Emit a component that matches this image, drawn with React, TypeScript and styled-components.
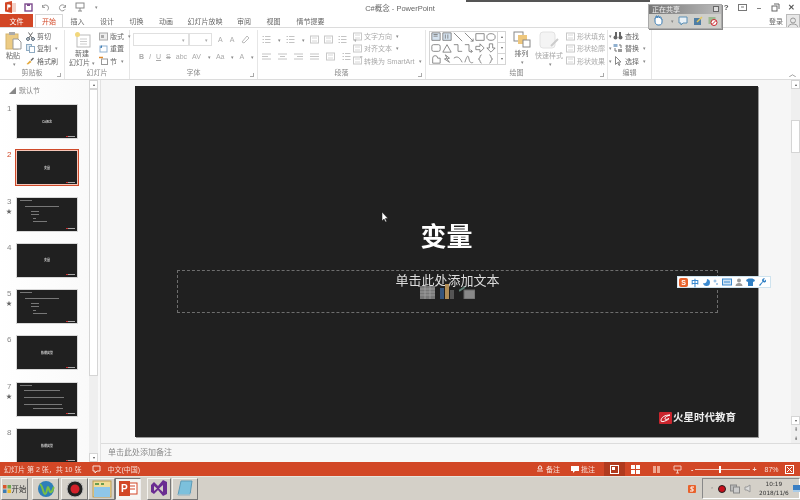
import { FunctionComponent, ReactNode } from "react"
import styled, { createGlobalStyle } from "styled-components"

const CJK = `"Liberation Sans", "Noto Sans CJK SC", sans-serif`

const GlobalStyle = createGlobalStyle`
  html, body { margin: 0; padding: 0; background: #fff; }
  * { box-sizing: border-box; }
`

const Screen = styled.div`
  position: relative;
  width: 800px;
  height: 500px;
  overflow: hidden;
  display: flex;
  flex-direction: column;
  font-family: ${CJK};
  font-size: 7px;
  color: #666;
  background: #fff;
  filter: blur(0.45px);
`

/* ---------- title bar ---------- */
const TitleBar = styled.div`
  height: 14px;
  flex: none;
  display: flex;
  align-items: center;
  padding-left: 4px;
  position: relative;
`
const Quick = styled.div`
  display: flex;
  align-items: center;
  gap: 8px;
  width: 300px;
`
const WindowTitle = styled.div`
  position: absolute;
  left: 300px;
  width: 200px;
  text-align: center;
  font-size: 7.5px;
  color: #666;
`
const WindowButtons = styled.div`
  margin-left: auto;
  display: flex;
  align-items: center;
  color: #555;
  font-size: 8px;
  font-weight: bold;
`
const WindowButton = styled.span`
  width: 16.4px;
  display: flex;
  justify-content: center;
`

/* ---------- tabs ---------- */
const TabBar = styled.div`
  height: 13px;
  flex: none;
  display: flex;
  align-items: stretch;
  position: relative;
`
const FileTab = styled.div`
  width: 33px;
  background: #d24726;
  color: #fff;
  display: flex;
  align-items: center;
  justify-content: center;
`
const Tab = styled.div<{ $w: number; $active?: boolean }>`
  width: ${(p) => p.$w}px;
  display: flex;
  align-items: center;
  justify-content: center;
  color: ${(p) => (p.$active ? "#d24726" : "#666")};
  background: #fff;
  ${(p) => p.$active && "border: 1px solid #d8d8d8; border-bottom: none; margin-left: 2px;"}
`
const Login = styled.div`
  margin-left: auto;
  display: flex;
  align-items: center;
  gap: 3px;
  color: #666;
`
const Avatar = styled.div`
  width: 14px;
  height: 14px;
  background: #e8e8e8;
  border: 1px solid #bbb;
  display: flex;
  align-items: flex-end;
  justify-content: center;
`

/* ---------- ribbon ---------- */
const Ribbon = styled.div`
  height: 53px;
  flex: none;
  display: flex;
  border-top: 1px solid #dcdcdc;
  border-bottom: 1px solid #dcdcdc;
  background: #fff;
  position: relative;
`
const Group = styled.div<{ $w: number }>`
  width: ${(p) => p.$w}px;
  flex: none;
  display: flex;
  flex-direction: column;
  border-right: 1px solid #e6e6e6;
  margin-top: 2px;
  position: relative;
`
const GroupBody = styled.div<{ $px?: number }>`
  flex: 1;
  display: flex;
  gap: 3px;
  padding: 0 ${(p) => p.$px ?? 3}px;
  min-height: 0;
`
const GroupLabel = styled.div`
  height: 12px;
  line-height: 11px;
  text-align: center;
  color: #888;
`
const Launcher = styled.span`
  position: absolute;
  right: 3px;
  bottom: 2px;
  width: 4px;
  height: 4px;
  border-right: 1px solid #aaa;
  border-bottom: 1px solid #aaa;
`
const BigButton = styled.div<{ $w: number; $dim?: boolean }>`
  width: ${(p) => p.$w}px;
  flex: none;
  display: flex;
  flex-direction: column;
  align-items: center;
  line-height: 9px;
  padding-top: 1px;
  color: ${(p) => (p.$dim ? "#aaa" : "#666")};
`
const BigIcon = styled.div`
  height: 19px;
  margin-bottom: 1px;
  display: flex;
  align-items: center;
`
const SmallColumn = styled.div<{ $w?: number }>`
  display: flex;
  flex-direction: column;
  ${(p) => p.$w && `width: ${p.$w}px;`}
`
const SmallRow = styled.div<{ $dim?: boolean }>`
  height: 12.5px;
  display: flex;
  align-items: center;
  gap: 2px;
  white-space: nowrap;
  color: ${(p) => (p.$dim ? "#aaa" : "#666")};
`
const Caret = styled.span`
  font-size: 5px;
  color: #888;
  margin-left: 2px;
`
const FontRows = styled.div<{ $w?: number }>`
  display: flex;
  flex-direction: column;
  gap: 4px;
  padding-top: 3px;
  ${(p) => (p.$w ? `flex: none; width: ${p.$w}px;` : "flex: 1;")}
`
const Line = styled.div<{ $gap?: number; $pl?: number }>`
  height: 13px;
  display: flex;
  align-items: center;
  gap: ${(p) => p.$gap ?? 5}px;
  padding-left: ${(p) => p.$pl ?? 0}px;
  color: #aaa;
  font-size: 7px;
`
const Combo = styled.div<{ $w: number }>`
  width: ${(p) => p.$w}px;
  height: 13px;
  border: 1px solid #e0e0e0;
  display: flex;
  align-items: center;
  justify-content: flex-end;
  padding-right: 3px;
  font-size: 5px;
  color: #aaa;
`
const Gallery = styled.div`
  width: 77px;
  height: 34px;
  margin: 1px 2px 0 0;
  border: 1px solid #d5d5d5;
  display: flex;
  flex: none;
`
const GalleryGrid = styled.div`
  flex: 1;
  display: grid;
  grid-template-columns: repeat(6, 1fr);
  grid-template-rows: repeat(3, 1fr);
  place-items: center;
`
const GalleryScroll = styled.div`
  width: 8px;
  border-left: 1px solid #d5d5d5;
  display: flex;
  flex-direction: column;
`
const GalleryStep = styled.div`
  flex: 1;
  border-bottom: 1px solid #d5d5d5;
  font-size: 4px;
  text-align: center;
  line-height: 10px;
  color: #666;
`
const Collapse = styled.div`
  margin-left: auto;
  align-self: flex-end;
  padding: 0 4px 1px 0;
  font-size: 7px;
  color: #666;
`

/* ---------- workspace ---------- */
const Workspace = styled.div`
  flex: 1;
  min-height: 0;
  display: flex;
  background: #f6f6f6;
`
const SidePane = styled.div`
  width: 101px;
  flex: none;
  display: flex;
  background: linear-gradient(90deg, #fff, #f9f9f9);
  border-right: 1px solid #e2e2e2;
  padding-right: 2px;
`
const SlideList = styled.div`
  flex: 1;
  overflow: hidden;
`
const SectionName = styled.div`
  height: 24px;
  padding: 5px 0 0 9px;
  display: flex;
  gap: 3px;
  color: #888;
`
const ThumbRow = styled.div`
  height: 46.3px;
  display: flex;
`
const ThumbIndex = styled.div<{ $on?: boolean }>`
  width: 16px;
  padding-left: 7px;
  font-size: 8px;
  line-height: 9px;
  color: ${(p) => (p.$on ? "#d24726" : "#888")};
`
const Star = styled.div`
  font-size: 6px;
  margin-top: 1px;
  margin-left: -1px;
  color: #666;
`
const Thumb = styled.div<{ $on?: boolean; $list?: boolean }>`
  position: relative;
  width: 62px;
  height: 35px;
  background: #202020;
  border: 1px solid ${(p) => (p.$on ? "#f4c4b6" : "#d8d8d8")};
  outline: ${(p) => (p.$on ? "1px solid #cf4a2a" : "none")};
  display: flex;
  flex-direction: column;
  align-items: center;
  justify-content: ${(p) => (p.$list ? "flex-start" : "center")};
  padding-top: ${(p) => (p.$list ? 2 : 0)}px;
  color: #ccc;
  font-size: 3px;
  font-weight: bold;
`
const ThumbLine = styled.div<{ $w: number; $x: number; $mb: number }>`
  width: ${(p) => p.$w}px;
  height: 1px;
  margin: 0 0 ${(p) => p.$mb}px ${(p) => p.$x}px;
  align-self: flex-start;
  background: #777;
`
const ThumbLogo = styled.div`
  position: absolute;
  right: 2px;
  bottom: 1.5px;
  width: 9px;
  height: 1px;
  background: linear-gradient(90deg, #c33 25%, #aaa 25%);
`
const VScroll = styled.div<{ $w: number }>`
  width: ${(p) => p.$w}px;
  flex: none;
  display: flex;
  flex-direction: column;
  background: #efefef;
`
const ScrollButton = styled.div`
  height: 9px;
  flex: none;
  background: #fff;
  border: 1px solid #d5d5d5;
  font-size: 4px;
  line-height: 7px;
  text-align: center;
  color: #555;
`
const ScrollThumb = styled.div<{ $top: number; $h: number }>`
  margin-top: ${(p) => p.$top}px;
  height: ${(p) => p.$h}px;
  flex: none;
  background: #fff;
  border: 1px solid #d5d5d5;
`
const ScrollSpacer = styled.div`
  flex: 1;
`
const PageStep = styled.div`
  height: 9px;
  flex: none;
  font-size: 5px;
  line-height: 9px;
  text-align: center;
  color: #666;
`
const Center = styled.div`
  flex: 1;
  min-width: 0;
  display: flex;
  flex-direction: column;
`
const Stage = styled.div`
  flex: 1;
  min-height: 0;
  display: flex;
  justify-content: space-between;
  padding-left: 34px;
`
const Notes = styled.div`
  height: 19px;
  flex: none;
  background: #f7f7f7;
  border-top: 1px solid #dcdcdc;
  padding-left: 7px;
  font-size: 8px;
  line-height: 18px;
  color: #888;
`
const Slide = styled.div`
  position: relative;
  width: 623px;
  height: 351px;
  margin-top: 6px;
  background: #202020;
  box-shadow: 1px 1px 0 #999;
  color: #fff;
  display: flex;
  flex-direction: column;
`
const SlideTitle = styled.div`
  margin-top: 133px;
  text-align: center;
  font-size: 26px;
  line-height: 36px;
  font-weight: bold;
  color: #fff;
`
const Placeholder = styled.div`
  position: relative;
  width: 541px;
  height: 43px;
  margin: 15px 0 0 42px;
  border: 1px dashed #6e6e6e;
  text-align: center;
  font-size: 13px;
  line-height: 19px;
  color: #ddd;
`
const PlaceholderIcons = styled.div`
  position: absolute;
  left: 242px;
  top: 13px;
  display: flex;
  gap: 5px;
  align-items: flex-end;
`
const Brand = styled.div`
  position: absolute;
  right: 22px;
  bottom: 13px;
  display: flex;
  align-items: center;
  gap: 1px;
  font-size: 10.5px;
  font-weight: bold;
  line-height: 13px;
  color: #eee;
`

/* ---------- bottom bars ---------- */
const StatusBar = styled.div`
  height: 14px;
  flex: none;
  background: #d24726;
  color: #f7ddd5;
  display: flex;
  align-items: center;
  padding-left: 4px;
`
const StatusItem = styled.div<{ $ml?: number }>`
  display: flex;
  align-items: center;
  gap: 2px;
  margin-left: ${(p) => p.$ml ?? 0}px;
  white-space: nowrap;
`
const ViewButton = styled.div<{ $active?: boolean; $ml?: number }>`
  width: 21px;
  height: 14px;
  margin-left: ${(p) => p.$ml ?? 0}px;
  display: flex;
  align-items: center;
  justify-content: center;
  background: ${(p) => (p.$active ? "#b03a1e" : "transparent")};
`
const ZoomTrack = styled.div`
  position: relative;
  width: 55px;
  height: 1px;
  background: #f3c7ba;
`
const ZoomKnob = styled.div`
  position: absolute;
  left: 24px;
  top: -3px;
  width: 2px;
  height: 7px;
  background: #fff;
`
const Taskbar = styled.div`
  height: 24px;
  flex: none;
  background: #d4d0c8;
  display: flex;
  align-items: center;
  padding-left: 1px;
  border-top: 1px solid #e6e4de;
`
const TaskButton = styled.div<{ $w: number; $ml?: number; $pressed?: boolean }>`
  width: ${(p) => p.$w}px;
  height: 22px;
  margin-left: ${(p) => p.$ml ?? 0}px;
  flex: none;
  display: flex;
  align-items: center;
  justify-content: center;
  gap: 1px;
  font-size: 7.5px;
  color: #333;
  background: ${(p) => (p.$pressed ? "#f6f5f2" : "#d4d0c8")};
  border: 1px solid;
  border-color: ${(p) => (p.$pressed ? "#777 #eee #eee #777" : "#f4f3ef #777 #777 #f4f3ef")};
`
const TaskSpacer = styled.div`
  flex: 1;
`
const Tray = styled.div`
  width: 98px;
  height: 21px;
  margin-left: 6px;
  flex: none;
  display: flex;
  align-items: center;
  gap: 4px;
  padding-left: 5px;
  border: 1px solid;
  border-color: #888 #fff #fff #888;
  color: #333;
`
const Clock = styled.div`
  width: 33px;
  margin-left: 2px;
  text-align: center;
  font-family: "DejaVu Sans", sans-serif;
  font-size: 5.8px;
  line-height: 9px;
  white-space: nowrap;
`

/* ---------- overlays ---------- */
const TopStrip = styled.div`
  position: absolute;
  left: 466px;
  top: 0;
  width: 184px;
  height: 2px;
  background: #555;
`
const SharePanel = styled.div`
  position: absolute;
  left: 648px;
  top: 4px;
  width: 74px;
  height: 25px;
  background: #cfcfcb;
  border: 1px solid #aaa;
  box-shadow: 1px 1px 0 #888;
  display: flex;
  flex-direction: column;
`
const ShareHead = styled.div`
  height: 9px;
  background: linear-gradient(90deg, #777, #bbb);
  color: #eee;
  font-size: 7px;
  line-height: 9px;
  padding-left: 3px;
  display: flex;
  justify-content: space-between;
`
const ShareClose = styled.span`
  width: 6px;
  height: 6px;
  margin: 1px 2px;
  background: #ddd;
  border: 1px solid #666;
`
const ShareTools = styled.div`
  flex: 1;
  display: flex;
  align-items: center;
  gap: 4px;
  padding-left: 4px;
`
const ImeBar = styled.div`
  position: absolute;
  left: 677px;
  top: 276px;
  width: 94px;
  height: 12px;
  background: #fff;
  border: 1px solid #cfe3ee;
  display: flex;
  align-items: center;
  gap: 3px;
  padding-left: 1px;
  color: #3b8ad0;
  font-size: 8px;
  font-weight: bold;
`
const ImeLogo = styled.span`
  width: 9px;
  height: 9px;
  background: #e8622c;
  color: #fff;
  border-radius: 2px;
  font-size: 7px;
  line-height: 9px;
  text-align: center;
`
const Pointer = styled.svg`
  position: absolute;
  left: 381px;
  top: 211px;
`

/* ---------- drawings ---------- */
const Svg: FunctionComponent<{ w: number; h?: number; vb?: string; children: ReactNode }> = ({ w, h, vb, children }) => (
  <svg width={w} height={h ?? w} viewBox={vb ?? `0 0 ${w} ${h ?? w}`} fill="none" style={{ flex: "none" }}>
    {children}
  </svg>
)

const PptLogo = () => (
  <Svg w={12}>
    <rect x="5" y="2" width="7" height="9" fill="#f3d2c8" />
    <path d="M1 1.500 8 0v12l-7-1.500z" fill="#d24726" />
    <path d="M3.200 3.500h2a1.300 1.300 0 0 1 0 3H4.200v2.200h-1z" fill="#fff" />
  </Svg>
)
const SaveIcon = () => (
  <Svg w={9}>
    <rect x="1" y="1" width="7" height="7" stroke="#7d4a8d" strokeWidth="1.400" />
    <rect x="3" y="1" width="3" height="2" fill="#7d4a8d" />
  </Svg>
)
const UndoIcon = ({ flip }: { flip?: boolean }) => (
  <Svg w={9}>
    <path
      d={flip ? "M7.500 2v2.400H5M7.300 4A3 3 0 1 0 7 6.400" : "M1.500 2v2.400H4M1.600 4.200A3 3 0 0 1 7.500 5c0 1.300-.6 2-1.500 2.500"}
      stroke="#999"
      strokeWidth="1"
    />
  </Svg>
)
const PresentIcon = () => (
  <Svg w={10}>
    <rect x="1" y="1" width="8" height="5" stroke="#888" />
    <path d="M5 6v3M3 9h4" stroke="#888" />
  </Svg>
)
const PasteIcon = () => (
  <Svg w={17} h={19}>
    <rect x="1" y="3" width="12" height="15" fill="#eccb84" stroke="#d6b56f" />
    <rect x="4" y="1" width="6" height="3" fill="#aaa" />
    <path d="M8 8h5l3 3v7H8z" fill="#fff" stroke="#999" />
  </Svg>
)
const ScissorsIcon = () => (
  <Svg w={9}>
    <circle cx="2" cy="7" r="1.400" stroke="#456" />
    <circle cx="7" cy="7" r="1.400" stroke="#456" />
    <path d="M2.800 6 6.500 0.500M6.200 6 2.500 0.500" stroke="#666" />
  </Svg>
)
const CopyIcon = () => (
  <Svg w={9}>
    <rect x="0.500" y="0.500" width="5" height="6" fill="#dce8f2" stroke="#8fabc2" />
    <rect x="3.500" y="2.500" width="5" height="6" fill="#fff" stroke="#8fabc2" />
  </Svg>
)
const BrushIcon = () => (
  <Svg w={9}>
    <path d="M0.500 8 4 4.500l1.500 1.500L2 8.500z" fill="#e5a93a" />
    <path d="M4.500 4 7 1.500l1 1L5.500 5z" fill="#666" />
  </Svg>
)
const NewSlideIcon = () => (
  <Svg w={17} h={17}>
    <rect x="3" y="4" width="13" height="12" fill="#fff" stroke="#bbb" />
    <path d="M6 8h7M6 10.500h7M6 13h7" stroke="#ccc" />
    <circle cx="3.500" cy="3.500" r="2.500" fill="#f2d77c" />
  </Svg>
)
const LayoutIcon = () => (
  <Svg w={9}>
    <rect x="0.500" y="1" width="8" height="7" fill="#eee" stroke="#aaa" />
    <rect x="2" y="3" width="3" height="3" fill="#aaa" />
  </Svg>
)
const ResetIcon = () => (
  <Svg w={9}>
    <rect x="1" y="2" width="7" height="6" fill="#fff" stroke="#8fb0cf" />
    <path d="M1 3.500 3 1v3z" fill="#3b7db5" />
  </Svg>
)
const SectionIcon = () => (
  <Svg w={9}>
    <rect x="2.500" y="3" width="6" height="5.500" fill="#fff" stroke="#999" />
    <path d="M0 1.500h4" stroke="#e08b2c" strokeWidth="1.500" />
  </Svg>
)
const ListIcon = ({ lines = 3 }: { lines?: number }) => (
  <Svg w={9}>
    {Array.from({ length: lines }).map((_, i) => (
      <path key={i} d={`M0.500 ${1.500 + i * 3}h1.500M3 ${1.500 + i * 3}h5.500`} stroke="#c4c4c4" />
    ))}
  </Svg>
)
const AlignIcon = ({ d }: { d: string }) => (
  <Svg w={9}>
    <path d={d} stroke="#c4c4c4" />
  </Svg>
)
const DimBox = ({ w = 9 }: { w?: number }) => (
  <Svg w={w} h={9}>
    <rect x="0.500" y="1" width={w - 1} height="7" stroke="#c8c8c8" />
    <path d={`M2 3h${w - 4}M2 6h${w - 4}`} stroke="#d8d8d8" />
  </Svg>
)
const FindIcon = () => (
  <Svg w={10}>
    <circle cx="2.500" cy="6.500" r="2" fill="#666" />
    <circle cx="7.500" cy="6.500" r="2" fill="#666" />
    <rect x="2" y="1" width="2" height="4" fill="#666" />
    <rect x="6" y="1" width="2" height="4" fill="#666" />
  </Svg>
)
const ReplaceIcon = () => (
  <Svg w={10}>
    <rect x="0.500" y="1" width="4" height="3" fill="#8fb0cf" />
    <rect x="5" y="6" width="4" height="3" fill="#999" />
    <path d="M6 2h2v3M4 8H2V5" stroke="#777" />
  </Svg>
)
const SelectIcon = () => (
  <Svg w={10}>
    <path d="M2.500 0.500v8l2-2 1.500 3 1-.5-1.500-3H8z" fill="#fff" stroke="#888" />
  </Svg>
)
const ArrangeIcon = () => (
  <Svg w={18} h={17}>
    <rect x="1" y="1" width="9" height="9" fill="#fff" stroke="#888" />
    <rect x="5" y="4" width="9" height="9" fill="#eec77d" />
    <rect x="10" y="9" width="7" height="7" fill="#fff" stroke="#888" />
  </Svg>
)
const QuickStyleIcon = () => (
  <Svg w={20}>
    <rect x="1" y="1" width="15" height="16" rx="3" fill="#f4f4f4" stroke="#e2e2e2" />
    <path d="M12 15 19 8" stroke="#ccc" strokeWidth="2" />
  </Svg>
)

const shapes: string[] = [
  "M1 1h10v9H1zM3 3h5M3 5h5",
  "M1 1h10v9H1zM4 3v5M7 3v5",
  "M1 1l10 10",
  "M1 1l10 10M8 11h3V8",
  "M1 2h10v8H1z",
  "M1 6a5 4 0 1 0 10 0a5 4 0 1 0-10 0",
  "M3 2h6a2 2 0 0 1 2 2v4a2 2 0 0 1-2 2H3a2 2 0 0 1-2-2V4a2 2 0 0 1 2-2",
  "M6 2l5 9H1z",
  "M1 2h5v8h5",
  "M1 2h5v8h4M8 8l2 2-2 2",
  "M1 4h5V1l5 5-5 5V8H1z",
  "M4 1h4v5h3l-5 5-5-5h3z",
  "M2 11V5a3 3 0 0 1 6 0h3v6z",
  "M4 1l5 4-3 1 3 4-6-4 3-1z",
  "M1 5c4-3 7-1 10 5",
  "M1 10c3-9 4-9 5-4s3 5 5 4",
  "M8 1C5 1 7 6 4 6c3 0 1 5 4 5",
  "M4 1c3 0 1 5 4 5c-3 0-1 5-4 5",
]

const TableIcon = () => (
  <Svg w={15} h={13}>
    <rect width="15" height="13" fill="#777" />
    <path d="M0 3h15M0 6h15M0 9h15M5 0v13M10 0v13" stroke="#aaa" strokeWidth="0.700" />
  </Svg>
)
const ChartIcon = () => (
  <Svg w={14} h={15}>
    <rect x="0" y="4" width="4" height="11" fill="#36557c" />
    <rect x="5" y="0" width="4" height="15" fill="#b08d57" />
    <rect x="10" y="6" width="4" height="9" fill="#555" />
  </Svg>
)
const ArtIcon = () => (
  <Svg w={16} h={13}>
    <path d="M0 5 6 1" stroke="#5d7f74" strokeWidth="2" />
    <rect x="5" y="4" width="11" height="9" fill="#888" stroke="#666" />
  </Svg>
)
const BrandLogo = () => (
  <Svg w={13} h={12}>
    <rect width="13" height="12" rx="1" fill="#c9252d" />
    <path d="M2 9c0-4 4-6 9-6-3 1-5 2-5 3.500 0 1.500 2 1 4 0-2 2.500-8 4-8 2.500z" stroke="#fff" />
  </Svg>
)

type ThumbData = { text?: string; lines?: [number, number, number][]; star?: boolean }

const listSlide: [number, number, number][] = [[12, 3, 5], [34, 8, 4], [8, 14, 2], [8, 14, 3], [3, 16, 2], [14, 16, 0]]

const Thumbnails: ThumbData[] = [
  { text: "C#概念" },
  { text: "变量" },
  { star: true, lines: listSlide },
  { text: "变量" },
  { star: true, lines: listSlide },
  { text: "数据类型" },
  { star: true, lines: [[12, 3, 4], [36, 7, 6], [40, 7, 6], [38, 7, 3], [30, 16, 0]] },
  { text: "数据类型" },
]

const Tabs: [string, number][] = [
  ["插入", 29], ["设计", 30], ["切换", 29], ["动画", 30], ["幻灯片放映", 48], ["审阅", 30], ["视图", 29], ["情节提要", 45],
]

const App: FunctionComponent = () => {
  return (
    <Screen>
      <GlobalStyle />
      <TitleBar>
        <Quick>
          <PptLogo />
          <SaveIcon />
          <UndoIcon />
          <UndoIcon flip />
          <PresentIcon />
          <Caret>▾</Caret>
        </Quick>
        <WindowTitle>C#概念 - PowerPoint</WindowTitle>
        <WindowButtons>
          <WindowButton>?</WindowButton>
          <WindowButton><Svg w={9}><rect x="0.500" y="1.500" width="8" height="6" stroke="#777" /><path d="M3 4h3" stroke="#777" /></Svg></WindowButton>
          <WindowButton>–</WindowButton>
          <WindowButton><Svg w={9}><rect x="1" y="3" width="5" height="5" stroke="#666" /><path d="M3 1h5v5" stroke="#666" /></Svg></WindowButton>
          <WindowButton>✕</WindowButton>
        </WindowButtons>
      </TitleBar>

      <TabBar>
        <FileTab>文件</FileTab>
        <Tab $w={28} $active>开始</Tab>
        {Tabs.map(([name, w]) => (
          <Tab key={name} $w={w}>{name}</Tab>
        ))}
        <Login>
          登录
          <Avatar>
            <Svg w={10}><circle cx="5" cy="3.500" r="2.500" stroke="#999" /><path d="M0 10c1-4 9-4 10 0" stroke="#999" /></Svg>
          </Avatar>
        </Login>
      </TabBar>

      <Ribbon>
        <Group $w={65}>
          <GroupBody>
            <BigButton $w={20}>
              <BigIcon><PasteIcon /></BigIcon>
              粘贴
              <Caret>▾</Caret>
            </BigButton>
            <SmallColumn>
              <SmallRow><ScissorsIcon />剪切</SmallRow>
              <SmallRow><CopyIcon />复制<Caret>▾</Caret></SmallRow>
              <SmallRow><BrushIcon />格式刷</SmallRow>
            </SmallColumn>
          </GroupBody>
          <GroupLabel>剪贴板</GroupLabel>
          <Launcher />
        </Group>
        <Group $w={65}>
          <GroupBody>
            <BigButton $w={28}>
              <BigIcon><NewSlideIcon /></BigIcon>
              新建
              <span>幻灯片<Caret>▾</Caret></span>
            </BigButton>
            <SmallColumn>
              <SmallRow><LayoutIcon />版式<Caret>▾</Caret></SmallRow>
              <SmallRow><ResetIcon />重置</SmallRow>
              <SmallRow><SectionIcon />节<Caret>▾</Caret></SmallRow>
            </SmallColumn>
          </GroupBody>
          <GroupLabel>幻灯片</GroupLabel>
        </Group>
        <Group $w={128}>
          <GroupBody>
            <FontRows>
              <Line $gap={0}>
                <Combo $w={56}>▾</Combo>
                <Combo $w={23}>▾</Combo>
                <Line $gap={7} $pl={6}>
                  <span>A</span><span>A</span>
                  <Svg w={9}><path d="M1 7 6 1l2 2-5 5z" stroke="#bbb" /></Svg>
                </Line>
              </Line>
              <Line $gap={5} $pl={6}>
                <b>B</b><i>I</i><u>U</u><s>S</s><span>abc</span><span>AV</span><Caret>▾</Caret><span>Aa</span><Caret>▾</Caret><span>A</span><Caret>▾</Caret>
              </Line>
            </FontRows>
          </GroupBody>
          <GroupLabel>字体</GroupLabel>
          <Launcher />
        </Group>
        <Group $w={168}>
          <GroupBody $px={4}>
            <FontRows $w={88}>
              <Line $gap={5}>
                <ListIcon /><Caret>▾</Caret><ListIcon /><Caret>▾</Caret>
                <DimBox /><DimBox />
                <ListIcon /><Caret>▾</Caret>
              </Line>
              <Line $gap={7}>
                <AlignIcon d="M0 2h9M0 4.500h6M0 7h9" />
                <AlignIcon d="M0 2h9M2 4.500h5M0 7h9" />
                <AlignIcon d="M0 2h9M3 4.500h6M0 7h9" />
                <AlignIcon d="M0 2h9M0 4.500h9M0 7h9" />
                <DimBox />
                <ListIcon /><Caret>▾</Caret>
              </Line>
            </FontRows>
            <SmallColumn>
              <SmallRow $dim><DimBox />文字方向<Caret>▾</Caret></SmallRow>
              <SmallRow $dim><DimBox />对齐文本<Caret>▾</Caret></SmallRow>
              <SmallRow $dim><DimBox />转换为 SmartArt<Caret>▾</Caret></SmallRow>
            </SmallColumn>
          </GroupBody>
          <GroupLabel>段落</GroupLabel>
          <Launcher />
        </Group>
        <Group $w={182}>
          <GroupBody $px={3}>
            <Gallery>
              <GalleryGrid>
                {shapes.map((d, i) => (
                  <Svg key={i} w={10} vb="0 0 12 12">
                    <path d={d} stroke="#777" fill={i < 2 ? "#d5e3f0" : "none"} />
                  </Svg>
                ))}
              </GalleryGrid>
              <GalleryScroll>
                <GalleryStep>▴</GalleryStep>
                <GalleryStep>▾</GalleryStep>
                <GalleryStep>▾</GalleryStep>
              </GalleryScroll>
            </Gallery>
            <BigButton $w={21}>
              <BigIcon><ArrangeIcon /></BigIcon>
              排列
              <Caret>▾</Caret>
            </BigButton>
            <BigButton $w={28} $dim>
              <BigIcon><QuickStyleIcon /></BigIcon>
              快速样式
              <Caret>▾</Caret>
            </BigButton>
            <SmallColumn>
              <SmallRow $dim><DimBox />形状填充<Caret>▾</Caret></SmallRow>
              <SmallRow $dim><DimBox />形状轮廓<Caret>▾</Caret></SmallRow>
              <SmallRow $dim><DimBox />形状效果<Caret>▾</Caret></SmallRow>
            </SmallColumn>
          </GroupBody>
          <GroupLabel>绘图</GroupLabel>
          <Launcher />
        </Group>
        <Group $w={44}>
          <GroupBody $px={5}>
            <SmallColumn>
              <SmallRow><FindIcon />查找</SmallRow>
              <SmallRow><ReplaceIcon />替换<Caret>▾</Caret></SmallRow>
              <SmallRow><SelectIcon />选择<Caret>▾</Caret></SmallRow>
            </SmallColumn>
          </GroupBody>
          <GroupLabel>编辑</GroupLabel>
        </Group>
        <Collapse>︿</Collapse>
      </Ribbon>

      <Workspace>
        <SidePane>
          <SlideList>
            <SectionName><span>◢</span>默认节</SectionName>
            {Thumbnails.map((t, i) => (
              <ThumbRow key={i}>
                <ThumbIndex $on={i === 1}>
                  {i + 1}
                  {t.star && <Star>★</Star>}
                </ThumbIndex>
                <Thumb $on={i === 1} $list={!!t.lines}>
                  {t.text}
                  {t.lines?.map(([w, x, mb], j) => <ThumbLine key={j} $w={w} $x={x} $mb={mb} />)}
                  <ThumbLogo />
                </Thumb>
              </ThumbRow>
            ))}
          </SlideList>
          <VScroll $w={9}>
            <ScrollButton>▴</ScrollButton>
            <ScrollThumb $top={0} $h={287} />
            <ScrollSpacer />
            <ScrollButton>▾</ScrollButton>
          </VScroll>
        </SidePane>
        <Center>
          <Stage>
            <Slide>
              <SlideTitle>变量</SlideTitle>
              <Placeholder>
                单击此处添加文本
                <PlaceholderIcons>
                  <TableIcon />
                  <ChartIcon />
                  <ArtIcon />
                </PlaceholderIcons>
              </Placeholder>
              <Brand>
                <BrandLogo />
                火星时代教育
              </Brand>
            </Slide>
            <VScroll $w={9}>
              <ScrollButton>▴</ScrollButton>
              <ScrollThumb $top={31} $h={33} />
              <ScrollSpacer />
              <ScrollButton>▾</ScrollButton>
              <PageStep>⇞</PageStep>
              <PageStep>⇟</PageStep>
            </VScroll>
          </Stage>
          <Notes>单击此处添加备注</Notes>
        </Center>
      </Workspace>

      <StatusBar>
        <StatusItem>幻灯片 第 2 张，共 10 张</StatusItem>
        <StatusItem $ml={11}>
          <Svg w={9}><path d="M1 1h7v5H5L3 8V6H1z" stroke="#f7ddd5" /></Svg>
        </StatusItem>
        <StatusItem $ml={6}>中文(中国)</StatusItem>
        <StatusItem $ml={396}>
          <Svg w={8}><path d="M1 6h6M2 4h4l-1-3H3z" stroke="#f7ddd5" /></Svg>
          备注
        </StatusItem>
        <StatusItem $ml={11}>
          <Svg w={8}><path d="M0 1h8v5H4L2 8V6H0z" fill="#fff" /></Svg>
          批注
        </StatusItem>
        <ViewButton $active $ml={9}>
          <Svg w={9}><rect x="0.500" y="0.500" width="8" height="8" stroke="#fff" /><rect x="2" y="2" width="3" height="3" fill="#fff" /></Svg>
        </ViewButton>
        <ViewButton>
          <Svg w={9}><path d="M0 0h4v4H0zM5 0h4v4H5zM0 5h4v4H0zM5 5h4v4H5z" fill="#fff" /></Svg>
        </ViewButton>
        <ViewButton>
          <Svg w={9}><path d="M1 1h3v7H1zM5 1h3v7H5z" fill="#f0a892" /></Svg>
        </ViewButton>
        <ViewButton>
          <Svg w={9}><path d="M1 1h7v4H1zM4.500 5v3M3 8h3" stroke="#f3c7ba" /></Svg>
        </ViewButton>
        <StatusItem $ml={3}>
          <b>-</b>
          <ZoomTrack><ZoomKnob /></ZoomTrack>
          <b>+</b>
        </StatusItem>
        <StatusItem $ml={8}>87%</StatusItem>
        <StatusItem $ml={6}>
          <Svg w={9}><rect x="0.500" y="0.500" width="8" height="8" stroke="#fff" /><path d="M2 2l5 5M7 2 2 7" stroke="#fff" /></Svg>
        </StatusItem>
      </StatusBar>

      <Taskbar>
        <TaskButton $w={27}>
          <Svg w={8}><path d="M0 0h3.500v3.500H0z" fill="#d9552b" /><path d="M4.500 0H8v3.500H4.500z" fill="#6aa84f" /><path d="M0 4.500h3.500V8H0z" fill="#3b7db5" /><path d="M4.500 4.500H8V8H4.500z" fill="#e8b82e" /></Svg>
          开始
        </TaskButton>
        <TaskButton $w={27} $ml={4}>
          <Svg w={18}><circle cx="9" cy="9" r="8" fill="#2f7fb8" /><path d="M3 4c3 2 3 10 5 10s2-7 3-7 1 6 3 5 2-4 3-5" stroke="#7bc043" strokeWidth="2" /></Svg>
        </TaskButton>
        <TaskButton $w={27} $ml={2}>
          <Svg w={18}><circle cx="9" cy="9" r="8" fill="#222" stroke="#bbb" /><circle cx="9" cy="9" r="4.500" fill="#d3202a" /></Svg>
        </TaskButton>
        <TaskButton $w={27}>
          <Svg w={20} h={18}><rect x="1" y="1" width="18" height="16" fill="#f2dc96" stroke="#b99a55" /><rect x="2" y="7" width="16" height="10" fill="#8fc6e8" /><path d="M3 4h4M9 4h3" stroke="#6a9c4f" strokeWidth="2" /></Svg>
        </TaskButton>
        <TaskButton $w={26} $pressed>
          <Svg w={20} h={17}><rect x="8" y="3" width="11" height="11" fill="#fff" stroke="#d24726" /><path d="M11 6h6M11 9h6" stroke="#d24726" /><rect x="1" y="1" width="11" height="15" fill="#d24726" /><text x="3" y="12" fontSize="10" fontWeight="bold" fill="#fff" fontFamily="Liberation Sans">P</text></Svg>
        </TaskButton>
        <TaskButton $w={24} $ml={6}>
          <Svg w={18} h={17}><path d="M1 5v7l3 2 4-4 5 6 4-2V2l-4-2-5 6-4-4zM4 6l3 2.500L4 11zM13 5v7l-4-3.500z" fill="#6a2c91" /></Svg>
        </TaskButton>
        <TaskButton $w={26} $ml={1}>
          <Svg w={18}><path d="M5 1h11l-2 14H2z" fill="#7cc0dc" stroke="#5e9cb8" /><path d="M2 15h12l2-3" stroke="#ccc" /></Svg>
        </TaskButton>
        <TaskSpacer />
        <Svg w={8}><rect width="8" height="8" rx="1" fill="#e8622c" /><path d="M6 2H3v2h2v2H2" stroke="#fff" /></Svg>
        <Tray>
          <Caret>⌃</Caret>
          <Svg w={8}><circle cx="4" cy="4" r="3.500" fill="#c8101c" stroke="#222" /></Svg>
          <Svg w={10}><rect x="0.500" y="1" width="6" height="6" fill="#bbb" stroke="#888" /><rect x="3.500" y="3" width="6" height="6" fill="#ccc" stroke="#888" /></Svg>
          <Svg w={9}><path d="M1 3h2l3-2v7L3 6H1z" fill="#ddd" stroke="#999" /></Svg>
          <Clock>10:19<br />2018/11/6</Clock>
          <Svg w={9}><rect width="9" height="7" y="1" fill="#3a7fc4" /><rect width="9" height="2" y="6" fill="#aacce8" /></Svg>
        </Tray>
      </Taskbar>

      <TopStrip />
      <SharePanel>
        <ShareHead>正在共享<ShareClose /></ShareHead>
        <ShareTools>
          <Svg w={12}><path d="M2 6V3l1 0 0-2h1v2l1-2h1v2l1-1h1v2l1 0v3c0 2-1 3-3 3H5C3 10 2 8 2 6z" fill="#fff" stroke="#3b7db5" /></Svg>
          <Caret>▾</Caret>
          <Svg w={11}><path d="M1 1h8v6H5L3 9V7H1z" fill="#e9f1f7" stroke="#5a8fb5" /></Svg>
          <Svg w={11}><rect x="1" y="2" width="7" height="7" fill="#4f7ea5" /><path d="M4 6 9 1" stroke="#e4c75c" strokeWidth="1.500" /></Svg>
          <Svg w={11}><rect x="0.500" y="1" width="7" height="7" fill="#9bb98f" /><circle cx="6" cy="6.500" r="3" fill="#fff" stroke="#c9252d" /><path d="M4 8.500 8 4.500" stroke="#c9252d" /></Svg>
        </ShareTools>
      </SharePanel>

      <ImeBar>
        <ImeLogo>S</ImeLogo>
        中
        <Svg w={8}><path d="M5 1a3.500 3.500 0 1 1-4 4c2 1 4 0 4-4z" fill="#3b8ad0" /></Svg>
        <Svg w={6}><circle cx="2" cy="2" r="1" stroke="#3b8ad0" strokeWidth="0.600" /><circle cx="4" cy="5" r="0.800" fill="#3b8ad0" /></Svg>
        <Svg w={10}><rect x="0.500" y="2" width="9" height="6" fill="#cfe3f4" stroke="#3b8ad0" /><path d="M2 5h6" stroke="#3b8ad0" /></Svg>
        <Svg w={8}><circle cx="4" cy="2.500" r="2" fill="#999" /><path d="M0.500 8c0-4 7-4 7 0z" fill="#999" /></Svg>
        <Svg w={9}><path d="M0 2l2.500-1.500h4L9 2 8 4 7 3.500V8H2V3.500L1 4z" fill="#2f7fc4" /></Svg>
        <Svg w={8}><path d="M1 7l3.500-3.500a2 2 0 0 1 2.500-3L5.500 2 6.500 3 8 1.500a2 2 0 0 1-3 2.500L2 8z" fill="#2f7fc4" /></Svg>
      </ImeBar>

      <Pointer width="8" height="12" viewBox="0 0 8 12">
        <path d="M1 1v9l2-2 1.500 3 1.200-.6L4.300 7.500H7z" fill="#fff" stroke="#111" strokeWidth="0.500" />
      </Pointer>
    </Screen>
  )
}

export default App
